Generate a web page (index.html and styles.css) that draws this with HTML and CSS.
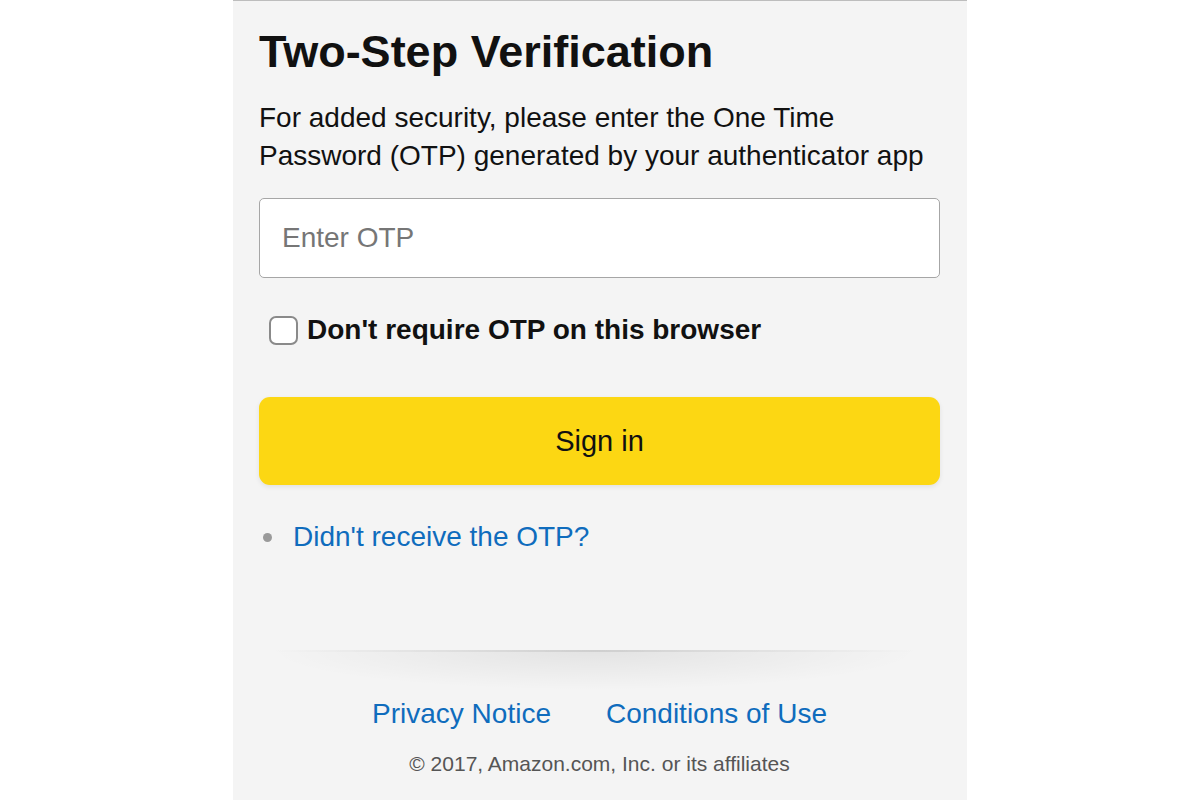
FILE: index.html
```html
<!DOCTYPE html>
<html lang="en">
<head>
    <meta charset="UTF-8">
    <meta name="viewport" content="width=device-width, initial-scale=1.0">
    <title>Two-Step Verification</title>
    <link rel="stylesheet" href="styles.css">
</head>
<body>
    <!-- Main panel -->
    <div class="panel">
        <h1>Two-Step Verification</h1>
        <p class="intro">For added security, please enter the One Time Password (OTP) generated by your authenticator app</p>

        <form class="otp-form">
            <input type="text" class="otp-input" placeholder="Enter OTP">

            <label class="remember">
                <input type="checkbox" class="remember-box">
                <span>Don't require OTP on this browser</span>
            </label>

            <button type="button" class="signin">Sign in</button>
        </form>

        <div class="help-row">
            <span class="bullet"></span>
            <a href="#" class="link">Didn't receive the OTP?</a>
        </div>

        <!-- Footer -->
        <div class="divider"></div>
        <div class="footer-links">
            <a href="#" class="link">Privacy Notice</a>
            <a href="#" class="link">Conditions of Use</a>
        </div>
        <div class="copyright">&copy; 2017, Amazon.com, Inc. or its affiliates</div>
    </div>
</body>
</html>
```

FILE: styles.css
```css
/* Base page */
body {
    margin: 0;
    background-color: #ffffff;
    font-family: "Liberation Sans", Arial, sans-serif;
    color: #111111;
}

/* Grey panel in the middle */
.panel {
    width: 734px;
    min-height: 100vh;
    margin: 0 auto;
    box-sizing: border-box;
    padding: 25px 27px 0 26px;
    background-color: #f4f4f4;
    border-top: 1px solid #bdbdbd;
}

h1 {
    margin: 0;
    font-size: 45px;
    line-height: 52px;
    font-weight: bold;
}

.intro {
    margin: 21px 0 0;
    font-size: 28px;
    line-height: 38px;
}

.otp-form {
    margin: 0;
}

/* OTP text field */
.otp-input {
    display: block;
    width: 100%;
    height: 80px;
    margin-top: 23px;
    padding: 0 22px;
    box-sizing: border-box;
    border: 1px solid #a6a6a6;
    border-radius: 5px;
    background-color: #ffffff;
    font-family: inherit;
    font-size: 28px;
    color: #111111;
}

.otp-input::placeholder {
    color: #767676;
}

/* Checkbox row */
.remember {
    display: flex;
    align-items: center;
    gap: 9px;
    height: 40px;
    margin-top: 32px;
    padding-left: 10px;
    font-size: 28px;
    font-weight: bold;
}

.remember-box {
    appearance: none;
    width: 29px;
    height: 29px;
    margin: 0;
    border: 2px solid #8a8a8a;
    border-radius: 7px;
    background-color: #ffffff;
}

/* Yellow button */
.signin {
    display: block;
    width: 100%;
    height: 88px;
    margin-top: 47px;
    border: none;
    border-radius: 11px;
    background-color: #fcd713;
    box-shadow: 0 2px 5px rgba(0, 0, 0, 0.08);
    font-family: inherit;
    font-size: 29px;
    color: #111111;
}

.help-row {
    display: flex;
    align-items: center;
    margin-top: 33px;
    padding-left: 4px;
    font-size: 28px;
    line-height: 38px;
}

.bullet {
    width: 9px;
    height: 9px;
    border-radius: 50%;
    background-color: #9a9a9a;
    margin-right: 21px;
}

.link {
    color: #0f6cbd;
    text-decoration: none;
}

/* Shaded divider */
.divider {
    position: relative;
    height: 40px;
    margin: 94px 20px 0 10px;
    background: radial-gradient(farthest-side at 50% 0, rgba(0, 0, 0, 0.07), rgba(0, 0, 0, 0));
}

.divider::before {
    content: "";
    position: absolute;
    left: 0;
    right: 0;
    top: 0;
    height: 2px;
    background: linear-gradient(to right, rgba(0, 0, 0, 0), rgba(0, 0, 0, 0.09) 50%, rgba(0, 0, 0, 0));
}

.footer-links {
    display: flex;
    justify-content: center;
    gap: 55px;
    margin-top: 5px;
    font-size: 28px;
    line-height: 38px;
}

.copyright {
    margin-top: 17px;
    text-align: center;
    font-size: 21px;
    line-height: 28px;
    color: #555555;
}
```
